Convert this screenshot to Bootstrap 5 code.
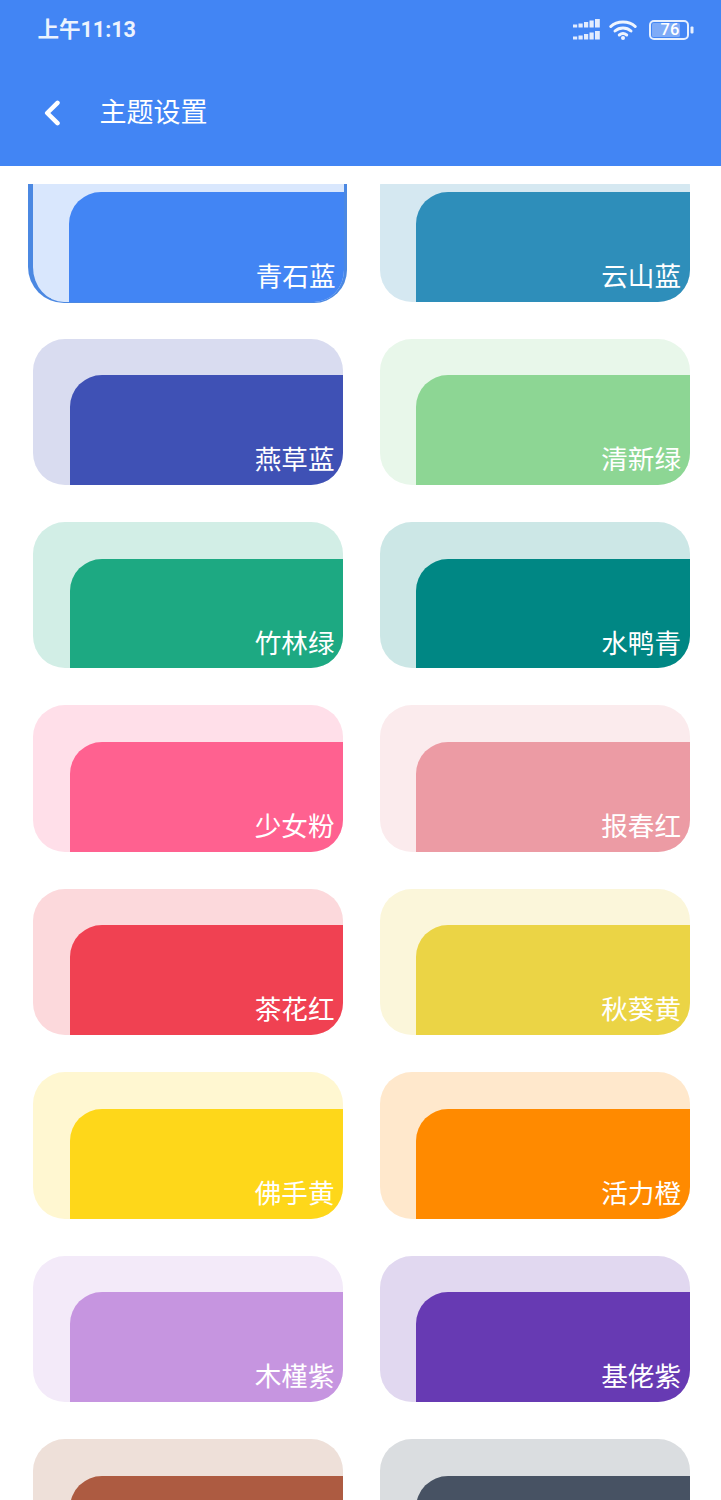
<!DOCTYPE html>
<html lang="zh-CN">
<head>
<meta charset="utf-8">
<title>主题设置</title>
<link href="https://cdn.jsdelivr.net/npm/bootstrap@5.3.0/dist/css/bootstrap.min.css" rel="stylesheet">
<style>
body{font-family:Roboto,"Noto Sans CJK SC",sans-serif;background:#fff;height:1500px;}
.app-top{height:165.5px;background:#4285f4;color:#fff;flex:none;}
.status-row{height:59px;padding:0 26px 0 37.5px;}
.clock{font-size:21.5px;font-weight:700;line-height:1;opacity:.9;}
.title-row{height:106.5px;padding:2px 0 0 44px;gap:39.5px;}
.page-title{font-size:27px;line-height:1;font-weight:400;margin:0;}
.batt-wrap{width:46px;height:20px;}
.batt-num{font-size:16.5px;font-weight:500;line-height:1;left:2px;width:38px;top:2px;text-align:center;color:#fff;}
.scroller{margin-top:18px;height:1316.5px;}
.swatch-grid{display:grid;grid-template-columns:310px 310px;column-gap:36.5px;row-gap:37px;padding-left:33px;margin-top:-28.200px;}
.swatch{height:146.4px;border-radius:32px;padding:36.5px 0 0 36.5px;overflow:hidden;background:var(--soft);display:flex;}
.swatch-face{flex:1;background:var(--solid);border-radius:32px 0 0 0;display:flex;align-items:flex-end;justify-content:flex-end;padding:0 8.500px 9px 0;color:#fff;font-size:26.6px;line-height:1.2;}
.swatch.picked{margin:0 -3.5px -1.5px -5.5px;height:147.9px;border:solid #4b88e2;border-width:0 3.5px 1.5px 5.5px;border-radius:0 0 33px 36px;}
.swatch.picked .swatch-face{padding-right:11.500px;margin-right:-3.5px;padding-bottom:9px;}
.t1{--solid:#4285f4;--soft:#d9e7fd}.t2{--solid:#2e8eba;--soft:#d5e8f1}
.t3{--solid:#3f51b5;--soft:#d9dcf0}.t4{--solid:#8dd694;--soft:#e8f7ea}
.t5{--solid:#1da982;--soft:#d2eee6}.t6{--solid:#008784;--soft:#cce7e6}
.t7{--solid:#ff6190;--soft:#ffdfe9}.t8{--solid:#ec9ba4;--soft:#fbebed}
.t9{--solid:#f04152;--soft:#fcd9dc}.t10{--solid:#ebd445;--soft:#fbf6da}
.t11{--solid:#fed71a;--soft:#fff7d1}.t12{--solid:#ff8a00;--soft:#ffe8cc}
.t13{--solid:#c695e0;--soft:#f3eaf9}.t14{--solid:#673ab3;--soft:#e1d8f0}
.t15{--solid:#ad5b41;--soft:#eee0d9}.t16{--solid:#475263;--soft:#dadde0}
</style>
</head>
<body class="d-flex flex-column overflow-hidden m-0">
<header class="app-top">
  <div class="status-row d-flex align-items-center justify-content-between">
    <span class="clock">上午11:13</span>
    <div class="d-flex align-items-center gap-2">
      <svg width="28" height="21" viewBox="0 0 28 21" fill="#e3ecfd" aria-hidden="true">
        <rect x="0" y="5.500" width="4.200" height="3"/><rect x="5.500" y="4.500" width="4.200" height="4"/><rect x="11" y="3" width="4.200" height="5.500"/><rect x="16.500" y="1.500" width="4.200" height="7"/><rect x="22" y="0" width="4.800" height="8.500"/>
        <rect x="0" y="17.500" width="4.200" height="3"/><rect x="5.500" y="16.500" width="4.200" height="4"/><rect x="11" y="15" width="4.200" height="5.500"/><rect x="16.500" y="13.500" width="4.200" height="7"/><rect x="22" y="12" width="4.800" height="8.500"/>
      </svg>
      <svg width="28" height="21" viewBox="0 0 28 21" fill="none" stroke="#eef4fe" stroke-width="3" stroke-linecap="round" aria-hidden="true">
        <path d="M1.800 7.500C8 1.500 20 1.500 26.200 7.500"/><path d="M6 12C10.500 8 17.500 8 22 12"/><path d="M10.300 16C12.500 14.300 15.500 14.300 17.700 16"/><circle cx="14" cy="19" r="2" fill="#eef4fe" stroke="none"/>
      </svg>
      <div class="batt-wrap position-relative ms-1">
        <svg class="d-block" width="46" height="20" viewBox="0 0 46 20" aria-hidden="true">
          <rect x="3" y="3" width="28" height="14" rx="1.500" fill="#7fabf7"/>
          <rect x="1" y="1" width="38" height="18" rx="4" fill="none" stroke="#e6effe" stroke-width="2"/>
          <rect x="41.500" y="6.500" width="3" height="7" rx="1" fill="#e6effe"/>
        </svg>
        <span class="batt-num position-absolute">76</span>
      </div>
    </div>
  </div>
  <div class="title-row d-flex align-items-center">
    <svg width="16" height="26" viewBox="0 0 16 26" fill="none" stroke="#fff" stroke-width="4.500" stroke-linecap="round" stroke-linejoin="round" aria-hidden="true"><path d="M13.500 2.800L3.200 13L13.500 23.200"/></svg>
    <h1 class="page-title">主题设置</h1>
  </div>
</header>
<main class="scroller overflow-hidden">
  <div class="swatch-grid">
    <div class="swatch picked t1"><div class="swatch-face">青石蓝</div></div>
    <div class="swatch t2"><div class="swatch-face">云山蓝</div></div>
    <div class="swatch t3"><div class="swatch-face">燕草蓝</div></div>
    <div class="swatch t4"><div class="swatch-face">清新绿</div></div>
    <div class="swatch t5"><div class="swatch-face">竹林绿</div></div>
    <div class="swatch t6"><div class="swatch-face">水鸭青</div></div>
    <div class="swatch t7"><div class="swatch-face">少女粉</div></div>
    <div class="swatch t8"><div class="swatch-face">报春红</div></div>
    <div class="swatch t9"><div class="swatch-face">茶花红</div></div>
    <div class="swatch t10"><div class="swatch-face">秋葵黄</div></div>
    <div class="swatch t11"><div class="swatch-face">佛手黄</div></div>
    <div class="swatch t12"><div class="swatch-face">活力橙</div></div>
    <div class="swatch t13"><div class="swatch-face">木槿紫</div></div>
    <div class="swatch t14"><div class="swatch-face">基佬紫</div></div>
    <div class="swatch t15"><div class="swatch-face"></div></div>
    <div class="swatch t16"><div class="swatch-face"></div></div>
  </div>
</main>
</body>
</html>
